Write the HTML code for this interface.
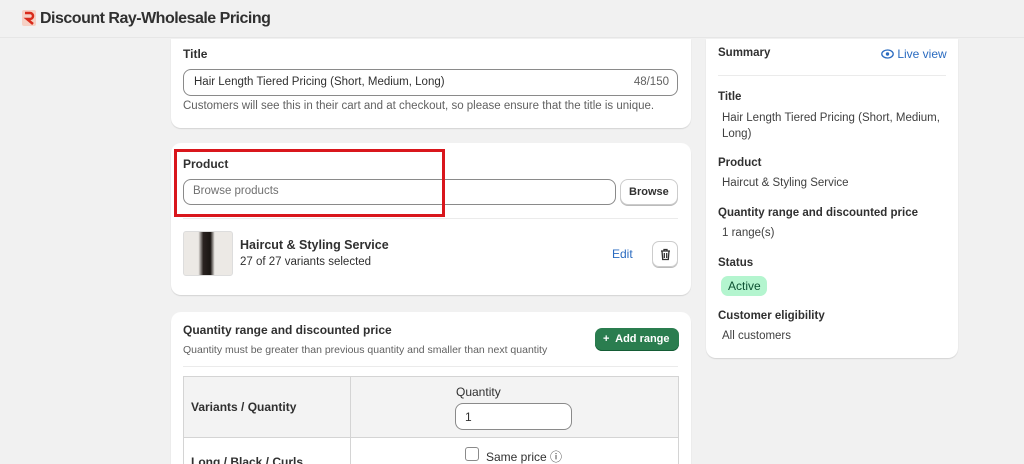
<!DOCTYPE html>
<html style="width:1024px;height:464px;overflow:hidden"><head><style>
*{box-sizing:border-box;margin:0;padding:0}
body{width:1024px;height:464px;overflow:hidden;background:#f1f1f1;font-family:"Liberation Sans",sans-serif;color:#303030;position:relative;font-size:13px}
.hdr{position:absolute;left:0;top:0;width:1024px;height:38px;background:#f1f1f1;border-bottom:1px solid #e6e6e6}
.logo{position:absolute;left:22px;top:10px;width:14px;height:16px;background:#f6d0c4;border-radius:2px}
.hdr h1{position:absolute;left:40px;top:10px;font-size:16px;font-weight:bold;color:#303030;letter-spacing:-0.5px}
.card{position:absolute;background:#fff;border-radius:10px;box-shadow:0 1px 1px rgba(0,0,0,.12)}
.abs{position:absolute}
.b{font-weight:bold;font-size:12px}
.inp{position:absolute;border:1px solid #8a8a8a;border-radius:8px;background:#fff}
.sum .l{position:absolute;left:12px;font-weight:bold;font-size:11.5px}
.sum .v{position:absolute;left:16px;font-size:11.5px;color:#404040}
</style></head><body>
<div class="hdr"><div class="logo"><svg width="14" height="16" viewBox="0 0 14 16"><path d="M3 3h5a3 3 0 0 1 0 6H5l6 5" stroke="#d82a1a" stroke-width="2.5" fill="none"/></svg></div><h1>Discount Ray-Wholesale Pricing</h1></div>

<div class="card" style="left:171px;top:39px;width:520px;height:89px;border-radius:0 0 10px 10px">
<div class="abs b" style="left:12px;top:8px">Title</div>
<div class="inp" style="left:12px;top:30px;width:495px;height:27px"><span class="abs" style="left:10px;top:6px;font-size:11.5px">Hair Length Tiered Pricing (Short, Medium, Long)</span><span class="abs" style="right:8px;top:6px;font-size:11.5px;color:#616161">48/150</span></div>
<div class="abs" style="left:12px;top:61px;font-size:11.5px;color:#616161">Customers will see this in their cart and at checkout, so please ensure that the title is unique.</div>
</div>

<div class="card" style="left:171px;top:143px;width:520px;height:152px">
<div class="abs b" style="left:12px;top:14px">Product</div>
<div class="inp" style="left:12px;top:36px;width:433px;height:26px"><span class="abs" style="left:9px;top:5px;font-size:11.5px;color:#707070">Browse products</span></div>
<div class="inp" style="left:449px;top:36px;width:58px;height:26px;border-color:#ccc;box-shadow:0 1px 0 #bbb"><span class="abs" style="left:8px;top:6px;font-size:11px;font-weight:bold">Browse</span></div>
<div class="abs" style="left:12px;top:75px;width:495px;border-top:1px solid #ebebeb"></div>
<div class="abs" style="left:12px;top:88px;width:50px;height:45px;border:1px solid #ddd;border-radius:3px;background:linear-gradient(90deg,#ece9e5 30%,#2a2320 40%,#1a1512 55%,#ece9e5 64%)"></div>
<div class="abs" style="left:69px;top:95px;font-size:12.5px;font-weight:bold">Haircut &amp; Styling Service</div>
<div class="abs" style="left:69px;top:113px;font-size:11.5px">27 of 27 variants selected</div>
<div class="abs" style="left:441px;top:104px;font-size:12px;color:#2a6bc0">Edit</div>
<div class="abs" style="left:481px;top:98px;width:26px;height:26px;border:1px solid #ccc;border-radius:7px;box-shadow:0 1px 0 #bbb"><svg class="abs" style="left:6px;top:6px" width="13" height="13" viewBox="0 0 13 13"><path d="M2 3h9M5 3V1.5h3V3M3 3l.7 8.5h5.6L10 3M5.3 5v5M7.7 5v5" stroke="#303030" stroke-width="1.3" fill="none"/></svg></div>
</div>
<div class="abs" style="left:174px;top:149px;width:271px;height:68px;border:3px solid #d9161c"></div>

<div class="card" style="left:171px;top:312px;width:520px;height:152px;border-radius:10px 10px 0 0">
<div class="abs b" style="left:12px;top:11px">Quantity range and discounted price</div>
<div class="abs" style="left:12px;top:32px;font-size:10.5px;color:#616161">Quantity must be greater than previous quantity and smaller than next quantity</div>
<div class="abs" style="left:424px;top:16px;width:84px;height:23px;background:#2a7d4f;border-radius:7px;color:#fff;font-size:11px;font-weight:bold;padding:5px 0 0 8px;box-shadow:inset 0 -1px 0 #145c35">+&nbsp; Add range</div>
<div class="abs" style="left:12px;top:54px;width:495px;border-top:1px solid #ebebeb"></div>
<div class="abs" style="left:12px;top:64px;width:496px;height:100px;border:1px solid #d4d4d4;border-bottom:none">
<div class="abs" style="left:0;top:0;width:494px;height:61px;background:#f3f3f3;border-bottom:1px solid #d4d4d4"></div>
<div class="abs" style="left:166px;top:0;height:100px;border-left:1px solid #d4d4d4"></div>
<div class="abs b" style="left:7px;top:23px">Variants / Quantity</div>
<div class="abs" style="left:272px;top:8px;font-size:12px">Quantity</div>
<div class="inp" style="left:271px;top:26px;width:117px;height:27px"><span class="abs" style="left:9px;top:6px;font-size:12px">1</span></div>
<div class="abs" style="left:281px;top:70px;width:14px;height:14px;border:1px solid #8a8a8a;border-radius:3px;background:#fff"></div>
<div class="abs" style="left:302px;top:71px;font-size:12px">Same price ⓘ</div>
<div class="abs b" style="left:7px;top:78px">Long / Black / Curls</div>
</div>
</div>

<div class="card sum" style="left:706px;top:39px;width:252px;height:319px;border-radius:0 0 10px 10px">
<div class="l" style="top:8px">Summary</div>
<div class="abs" style="left:175px;top:8px;font-size:12px;color:#2a6bc0"><svg width="13" height="10" viewBox="0 0 13 10" style="vertical-align:-1px"><ellipse cx="6.5" cy="5" rx="5.7" ry="4" stroke="#2a6bc0" stroke-width="1.3" fill="none"/><circle cx="6.5" cy="5" r="1.7" fill="#2a6bc0"/></svg> Live view</div>
<div class="abs" style="left:12px;top:36px;width:228px;border-top:1px solid #ebebeb"></div>
<div class="l" style="top:52px">Title</div>
<div class="v" style="top:71px;line-height:16px;width:228px">Hair Length Tiered Pricing (Short, Medium, Long)</div>
<div class="l" style="top:118px">Product</div>
<div class="v" style="top:138px">Haircut &amp; Styling Service</div>
<div class="l" style="top:168px">Quantity range and discounted price</div>
<div class="v" style="top:188px">1 range(s)</div>
<div class="l" style="top:218px">Status</div>
<div class="abs" style="left:15px;top:237px;width:46px;height:20px;background:#b4f5cf;border-radius:7px;font-size:12px;color:#0c5132;padding:3px 0 0 7px">Active</div>
<div class="l" style="top:271px">Customer eligibility</div>
<div class="v" style="top:291px">All customers</div>
</div>
</body></html>
